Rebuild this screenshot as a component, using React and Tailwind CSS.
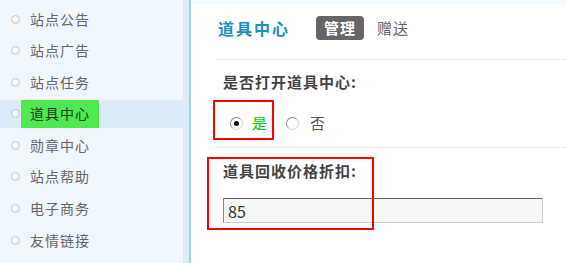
import React from "react";

const items = ["站点公告", "站点广告", "站点任务", "道具中心", "勋章中心", "站点帮助", "电子商务", "友情链接"];

function Bullet() {
  return (
    <span className="inline-block w-[9px] h-[9px] rounded-full border border-[#c8c8c8] bg-[radial-gradient(circle_at_40%_40%,#ffffff,#e6e6e6)]" />
  );
}

function Radio({ checked }) {
  return (
    <span className="relative inline-flex items-center justify-center w-[13px] h-[13px] rounded-full border border-[#8a8a8a] border-r-[#d8d8d8] border-b-[#d8d8d8] bg-white">
      {checked && <span className="w-[5px] h-[5px] rounded-full bg-black" />}
    </span>
  );
}

export default function App() {
  return (
    <div
      className="flex w-[566px] h-[263px] bg-white overflow-hidden"
      style={{ fontFamily: '"Noto Sans CJK SC", "Liberation Sans", sans-serif' }}
    >
      <div className="w-[183px] bg-[#f0f7fc] pt-[5px] flex flex-col gap-[3.6px]">
        {items.map((it) => {
          const active = it === "道具中心";
          return (
            <div
              key={it}
              className={
                "h-[28px] flex items-center pl-[11px] " +
                (active ? "bg-[#dcebf8]" : "")
              }
            >
              <Bullet />
              {active ? (
                <span className="ml-[1px] h-[28px] px-[9px] flex items-center bg-[#4ee94e] text-[14px] text-[#1a3a1a] tracking-[1px]">
                  {it}
                </span>
              ) : (
                <span className="ml-[10px] text-[14px] text-[#666] tracking-[1px]">{it}</span>
              )}
            </div>
          );
        })}
      </div>
      <div className="w-[6px] bg-[#dcebf8]" />
      <div className="w-[2px] bg-[#a9cddd]" />
      <div className="relative flex-1 flex flex-col">
        <div className="h-[4px] bg-[#f2f8fc]" />
        <div className="flex items-center pl-[27px] pt-[12px]">
          <span className="text-[16px] font-bold text-[#1b8dc4] tracking-[2px] leading-6">道具中心</span>
          <span className="ml-[26px] h-6 px-[8px] flex items-center rounded-[4px] bg-[#666] text-white text-[15px] font-bold tracking-[1px]">
            管理
          </span>
          <span className="ml-[13px] text-[15px] text-[#666] tracking-[1px]">赠送</span>
        </div>
        <div className="ml-[26px] mt-[19px] border-t border-dotted border-[#d4d8da]" />
        <div className="ml-[32px] mt-[12px] h-5 flex items-center text-[15px] font-bold text-[#444] tracking-[1px]">
          是否打开道具中心:
        </div>
        <div className="ml-[39px] mt-[21px] h-5 flex items-center">
          <Radio checked />
          <span className="ml-[9px] text-[15px] text-[#00cc00]">是</span>
          <span className="ml-[19px]"><Radio /></span>
          <span className="ml-[11px] text-[15px] text-[#555]">否</span>
        </div>
        <div className="ml-[26px] mt-[14px] border-t border-dotted border-[#d4d8da]" />
        <div className="ml-[32px] mt-[13px] h-5 flex items-center text-[15px] font-bold text-[#444] tracking-[1px]">
          道具回收价格折扣:
        </div>
        <div className="ml-[32px] mt-[17px] w-[320px] h-[25px] flex items-center pl-[4px] bg-[#f6f8f8] border border-[#ccc] border-t-[#666] border-l-[#888] text-[16px] text-[#333]">
          85
        </div>
        <div className="absolute left-[22px] top-[100px] w-[61px] h-[40px] border-2 border-[#ff0000]" />
        <div className="absolute left-[16px] top-[157px] w-[167px] h-[73px] border-2 border-[#ff0000]" />
      </div>
    </div>
  );
}
